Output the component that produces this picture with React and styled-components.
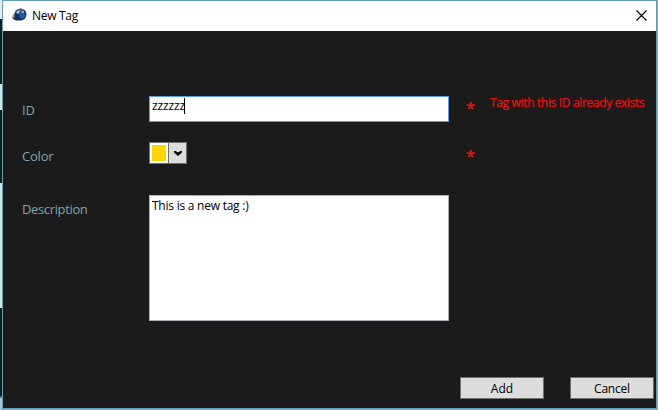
import React from 'react';
import styled, { createGlobalStyle } from 'styled-components';

const GlobalStyle = createGlobalStyle`
  * { box-sizing: border-box; }
  body { margin: 0; background: #1b1b1b; overflow: hidden; }
`;

const Screen = styled.div`
  display: flex;
  width: 658px;
  height: 410px;
  background: #8aa9bb;
  font-family: "Open Sans", "Noto Sans", sans-serif;
  font-size: 12px;
  line-height: 16px;
`;

const Backdrop = styled.div`
  width: 2px;
  display: flex;
  flex-direction: column;
`;

const Slice = styled.div`
  height: ${(p) => p.$height}px;
  background: ${(p) => p.$color};
`;

const Window = styled.section`
  width: 655px;
  height: 409px;
  display: flex;
  flex-direction: column;
  border: 1px solid #5f9fbd;
  background: #1b1b1b;
`;

const TitleBar = styled.header`
  height: 30px;
  display: flex;
  align-items: center;
  padding: 0 9px 2px 9px;
  background: #fff;
`;

const Title = styled.h1`
  flex: 1;
  margin: 2px 0 0 5px;
  font-size: 12px;
  font-weight: 400;
  letter-spacing: ${(p) => p.$tracking}px;
  color: #000;
`;

const CloseButton = styled.button`
  width: 11px;
  height: 11px;
  padding: 0;
  border: 0;
  background: none;
  display: flex;
`;

const Form = styled.div`
  flex: 1;
  display: flex;
  flex-direction: column;
  padding: 65px 2px 9px 19px;
`;

const Row = styled.div`
  display: flex;
  align-items: flex-start;
  height: ${(p) => p.$height}px;
  margin-bottom: ${(p) => p.$gap || 0}px;
`;

const Label = styled.label`
  width: 127px;
  padding-top: ${(p) => p.$top}px;
  font-size: 13px;
  letter-spacing: ${(p) => p.$tracking || 0}px;
  color: #7ba7a6;
`;

const Field = styled.div`
  width: 300px;
`;

const TextBox = styled.div`
  height: ${(p) => p.$height}px;
  display: flex;
  padding: ${(p) => p.$top || 1}px 2px 0;
  border: 1px solid ${(p) => (p.$focused ? '#569de5' : '#abadb3')};
  background: #fff;
  color: #000;
  white-space: nowrap;
  letter-spacing: ${(p) => p.$tracking || 0}px;
`;

const Caret = styled.span`
  width: 1px;
  height: 16px;
  margin-left: -1px;
  background: #000;
`;

const Picker = styled.div`
  width: 38px;
  height: 22px;
  display: flex;
  border: 1px solid #707070;
  background: #fff;
`;

const Swatch = styled.div`
  width: 14px;
  height: 16px;
  margin: 2px;
  background: #ffd600;
`;

const DropButton = styled.div`
  flex: 1;
  display: flex;
  align-items: center;
  justify-content: center;
  border-left: 1px solid #707070;
  background: #dddddd;
`;

const Required = styled.span`
  width: 42px;
  padding: ${(p) => p.$top}px 0 0 17px;
  font-size: 16px;
  line-height: 20px;
  font-weight: 700;
  color: #e51414;
`;

const ErrorText = styled.span`
  margin: -1px 0 0 -1px;
  white-space: nowrap;
  letter-spacing: -0.34px;
  color: #f01010;
  -webkit-text-stroke: 0.2px #f01010;
`;

const Actions = styled.footer`
  display: flex;
  justify-content: flex-end;
  gap: 26px;
  margin-top: auto;
`;

const Button = styled.button`
  width: 84px;
  height: 22px;
  padding: 1px 0 0;
  border: 1px solid #707070;
  background: #dddddd;
  color: #000;
  font: inherit;
  letter-spacing: ${(p) => p.$tracking || 0}px;
`;

const slices = [
  [19, '#e6eaeb'],
  [9, '#1c2025'],
  [56, '#17191b'],
  [26, '#dedede'],
  [73, '#17191b'],
  [125, '#dedede'],
  [88, '#17191b'],
  [2, '#2c82a6'],
  [12, '#b3bfca'],
];

function AppIcon() {
  return (
    <svg width="15" height="14" viewBox="0 0 15 14">
      <path d="M0 10C0 6 4 4 6 5L10 12C7 13 2 13 0 10Z" fill="#8b97a4" />
      <path d="M1 10C3 8 4 9 7 12C4 13 2 12 1 10Z" fill="#253849" />
      <circle cx="8.5" cy="6.5" r="6" fill="#122e63" />
      <path d="M4 3.5C6 0 11 0 12.5 3L9 5L5 6Z" fill="#48698f" />
      <circle cx="10.4" cy="7.5" r="3.1" fill="#2458a8" />
      <path d="M4.5 4L7.5 2L7 5L5 6Z" fill="#c1d0df" />
      <circle cx="11" cy="4" r="1.2" fill="#87a9d1" />
    </svg>
  );
}

export default function App() {
  return (
    <Screen>
      <GlobalStyle />
      <Backdrop>
        {slices.map(([height, color], i) => (
          <Slice key={i} $height={height} $color={color} />
        ))}
      </Backdrop>
      <Window>
        <TitleBar>
          <AppIcon />
          <Title $tracking={-0.3}>New Tag</Title>
          <CloseButton aria-label="Close">
            <svg width="11" height="11" viewBox="0 0 11 11">
              <path d="M.5 .5L10.5 10.5M10.5 .5L.5 10.5" stroke="#000" strokeWidth="1.1" />
            </svg>
          </CloseButton>
        </TitleBar>
        <Form>
          <Row $height={26} $gap={20}>
            <Label $top={6} $tracking={-0.2}>ID</Label>
            <Field>
              <TextBox $height={26} $tracking={-0.15} $focused>
                zzzzzz
                <Caret />
              </TextBox>
            </Field>
            <Required $top={2}>*</Required>
            <ErrorText>Tag with this ID already exists</ErrorText>
          </Row>
          <Row $height={22} $gap={31}>
            <Label $top={6} $tracking={-0.2}>Color</Label>
            <Field>
              <Picker>
                <Swatch />
                <DropButton>
                  <svg width="8" height="5" viewBox="0 0 8 5">
                    <path d="M0 0H1.5L4 1.6L6.5 0H8V1.4L4 5L0 1.4Z" fill="#000" />
                  </svg>
                </DropButton>
              </Picker>
            </Field>
            <Required $top={4}>*</Required>
          </Row>
          <Row $height={126}>
            <Label $top={6} $tracking={-0.36}>Description</Label>
            <Field>
              <TextBox $height={126} $tracking={-0.24} $top={2}>This is a new tag :)</TextBox>
            </Field>
          </Row>
          <Actions>
            <Button>Add</Button>
            <Button $tracking={-0.2}>Cancel</Button>
          </Actions>
        </Form>
      </Window>
    </Screen>
  );
}
